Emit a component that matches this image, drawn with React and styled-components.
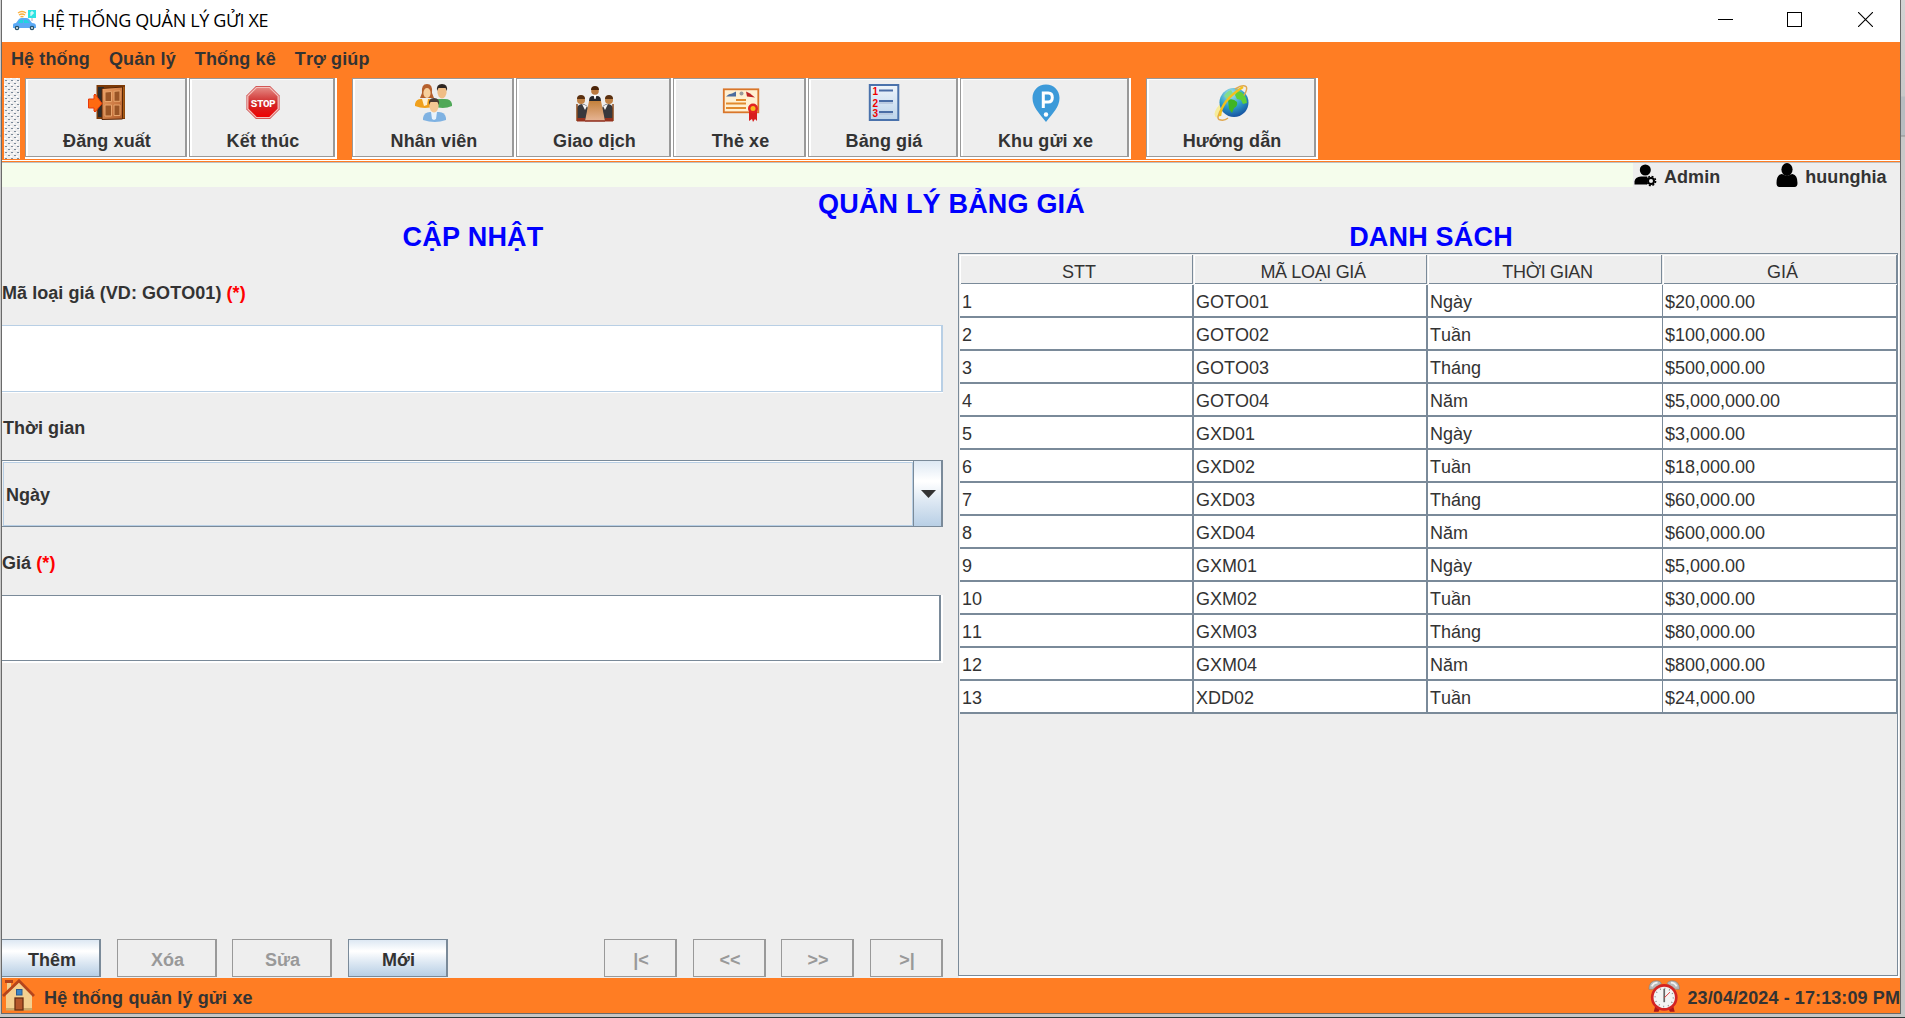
import React from "react";
import styled, { createGlobalStyle, css } from "styled-components";

const ORANGE = "#ff7d23";
const PANEL = "#eeeeee";
const LINE = "#7a8a99";
const SOFT = "#b8cfe5";
const DISABLED = "#999999";

const Global = createGlobalStyle`
  * { box-sizing: border-box; }
  html, body { margin: 0; padding: 0; overflow: hidden; }
  body {
    font-family: "Liberation Sans", Arial, sans-serif;
    font-size: 18px;
    line-height: 20px;
    color: #333333;
    font-kerning: none;
  }
  button { font: inherit; color: inherit; margin: 0; }
`;

const Desktop = styled.div`
  width: 1905px;
  height: 1018px;
  padding: 0 4px 4px 1px;
  background: linear-gradient(to bottom, #d3d3d3 0, #c9c9c9 96px, #b8bdc1 97px, #b8bdc1 135px, #8f8f8f 136px, #c9c9c9 137px, #c6c6c6 1017px, #2f3b3b 1017px);
`;

const Window = styled.div`
  height: 100%;
  display: flex;
  flex-direction: column;
  overflow: hidden;
  border: solid #6a6a6a;
  border-width: 0 1px 1px 1px;
  background: ${PANEL};
`;

const TitleBar = styled.header`
  height: 42px;
  flex: none;
  display: flex;
  align-items: center;
  padding-left: 10px;
  background: #ffffff;
  color: #000000;
`;

const TitleText = styled.span`
  flex: 1;
  margin-left: 5px;
  padding-bottom: 2px;
  font: 18px/22px "Open Sans", "Noto Sans", sans-serif;
  letter-spacing: -0.36px;
  white-space: nowrap;
`;

const TitleControls = styled.div`
  display: flex;
  gap: 55px;
  padding: 0 27px 3px 0;
  svg:nth-child(2) { margin-left: -1px; }
  svg:nth-child(3) { margin-left: 1px; }
`;

const MenuBar = styled.nav`
  height: 36px;
  flex: none;
  display: flex;
  gap: 19px;
  padding: 7px 0 0 9px;
  background: ${ORANGE};
  font-weight: bold;
  letter-spacing: 0.12px;
`;

const ToolBar = styled.div`
  height: 82px;
  flex: none;
  display: flex;
  padding-left: 2px;
  background: ${ORANGE};
`;

const Grip = styled.svg`
  width: 16px;
  height: 81px;
  margin-right: 5px;
  background: ${PANEL};
`;

const ToolShell = styled.div`
  width: ${(p) => p.$w}px;
  height: 81px;
  margin-right: ${(p) => (p.$last ? 15 : 0)}px;
  padding: 0 2px 2px 0;
  background: #ffffff;
`;

const ToolButton = styled.button`
  width: 100%;
  height: 79px;
  display: flex;
  flex-direction: column;
  align-items: center;
  gap: 9px;
  padding: 5px 0 0 3px;
  border: solid ${DISABLED};
  border-width: 1px 2px 1px 1px;
  background: ${PANEL};
  box-shadow: inset 2px 1px 0 #ffffff;
  font-weight: bold;
  letter-spacing: 0.1px;
  white-space: nowrap;
  svg { width: 38px; height: 38px; flex: none; }
`;

const Seam = styled.div`
  height: 3px;
  flex: none;
  background: linear-gradient(#ffffff 1px, ${ORANGE} 1px, ${ORANGE} 2px, #c0c0c0 2px);
`;

const UserBar = styled.div`
  height: 24px;
  flex: none;
  display: flex;
  font-weight: bold;
`;

const UserFill = styled.div`
  width: 1631px;
  background: #f5fdec;
`;

const UserItem = styled.div`
  display: flex;
  align-items: flex-start;
  gap: ${(p) => p.$gap}px;
  margin-left: ${(p) => p.$left}px;
  letter-spacing: 0.05px;
  span { padding-top: 4px; }
`;

const Heading = styled.h1`
  height: 33px;
  flex: none;
  margin: 0;
  padding: 1px 0 0 ${(p) => p.$shift || 0}px;
  text-align: center;
  font-size: 27px;
  line-height: 33px;
  font-weight: bold;
  letter-spacing: 0.18px;
  color: #0000ff;
`;

const Columns = styled.main`
  flex: 1;
  display: flex;
  gap: 15px;
  min-height: 0;
`;

const FormColumn = styled.section`
  width: 941px;
  display: flex;
  flex-direction: column;
`;

const Label = styled.label`
  height: ${(p) => p.$h}px;
  display: flex;
  align-items: center;
  padding-top: ${(p) => p.$drop}px;
  margin-left: ${(p) => p.$left || 0}px;
  font-weight: bold;
  letter-spacing: 0.06px;
  white-space: pre;
`;

const Required = styled.span`
  color: #ff0000;
`;

const LockedField = styled.div`
  height: 67px;
  margin-bottom: 1px;
  background: #ffffff;
  border: solid ${SOFT};
  border-width: 1px 2px 1px 0;
  box-shadow: 0 1px 0 #ffffff;
`;

const PriceShell = styled.div`
  height: 68px;
  padding: 0 2px 2px 0;
  background: #ffffff;
`;

const PriceField = styled.div`
  height: 66px;
  background: #ffffff;
  border: solid ${LINE};
  border-width: 1px 2px 1px 0;
`;

const Combo = styled.div`
  height: 67px;
  display: flex;
  border: solid ${LINE};
  border-width: 1px 2px 1px 0;
  font-weight: bold;
`;

const ComboValue = styled.div`
  flex: 1;
  display: flex;
  align-items: center;
  margin: 1px 0 0 1px;
  padding: 1px 0 0 2px;
  border: 1px solid ${SOFT};
  box-shadow: 0 -1px 0 #ffffff;
`;

const oceanFill = css`
  background: linear-gradient(#dde8f3 0%, #ffffff 30%, #ffffff 32%, #dde8f3 62%, ${SOFT} 100%);
`;

const ComboArrow = styled.div`
  width: 28px;
  display: flex;
  justify-content: center;
  align-items: center;
  padding-left: 2px;
  border-left: 1px solid ${LINE};
  ${oceanFill}
`;

const ButtonRow = styled.div`
  display: flex;
  margin-top: auto;
  margin-bottom: 1px;
`;

const ActionButton = styled.button`
  width: ${(p) => p.$w}px;
  height: 38px;
  margin-left: ${(p) => p.$gap}px;
  padding: 4px 0 0 ${(p) => (p.$flush ? 3 : 2)}px;
  border: 1px solid ${LINE};
  border-right-width: 2px;
  border-left-width: ${(p) => (p.$flush ? 0 : 1)}px;
  font-weight: bold;
  ${oceanFill}
  &:disabled {
    background: ${PANEL};
    border-color: ${DISABLED};
    color: ${DISABLED};
  }
`;

const ListColumn = styled.section`
  width: 940px;
  display: flex;
  flex-direction: column;
`;

const TableFrame = styled.div`
  height: 723px;
  border: 1px solid ${LINE};
  box-shadow: 1px 2px 0 #ffffff;
`;

const gridRow = css`
  display: grid;
  grid-template-columns: 234px 234px 235px 234px;
  margin-left: 1px;
`;

const HeadRow = styled.div`
  ${gridRow}
  height: 31px;
  padding-top: 1px;
`;

const HeadCell = styled.div`
  height: 29px;
  margin: 0 1px 0 1px;
  padding: 7px 0 0 5px;
  letter-spacing: ${(p) => (p.$tight ? -0.35 : 0)}px;
  text-align: center;
  border: solid ${LINE};
  border-width: 0 1px 1px 0;
  box-shadow: inset 0 1px 0 #ffffff, 0 1px 0 #ffffff, -1px 0 0 #ffffff;
  &:last-child { margin-right: 0; }
`;

const BodyRow = styled.div`
  ${gridRow}
  height: 33px;
  background: #ffffff;
  border-bottom: 2px solid ${LINE};
`;

const Cell = styled.div`
  padding: 7px 0 0 2px;
  border-right: ${(p) => (p.$thin ? 1 : 2)}px solid ${LINE};
`;

const StatusBar = styled.footer`
  height: 35px;
  flex: none;
  display: flex;
  align-items: center;
  background: ${ORANGE};
  font-weight: bold;
  white-space: nowrap;
  overflow: hidden;
`;

const StatusText = styled.span`
  margin-left: ${(p) => p.$left}px;
  padding-top: 5px;
  letter-spacing: ${(p) => p.$track}px;
`;

const StatusClock = styled.div`
  width: 252px;
  flex: none;
  margin-left: auto;
  display: flex;
  align-items: center;
`;

const AppLogo = () => (
  <svg width="25" height="22" viewBox="0 0 25 22">
    <path d="M6 3q4-3 8 0M7 5q3-2 6 0M8.500 7q1.500-1 3 0" fill="none" stroke="#fbb040" strokeWidth="1.300" />
    <rect x="16" y="0" width="8" height="8" fill="#2fe3e3" />
    <path d="M19 6V2h2v2h-2" fill="none" stroke="#fff" />
    <path d="M20 8v3" stroke="#aab" />
    <path d="M1 18v-3q0-2 3-2l3-4q1-1 3-1h4q2 0 3 1l3 4q4 0 4 3v2z" fill="#5aa9f5" />
    <path d="M6 13l2-3h3v3zM12 10h3l3 3h-6z" fill="#22d3e0" />
    <circle cx="5" cy="18" r="2.300" fill="#27536b" /><circle cx="20" cy="18" r="2.300" fill="#27536b" />
    <circle cx="5" cy="18" r="0.900" fill="#fff" /><circle cx="20" cy="18" r="0.900" fill="#fff" />
  </svg>
);

const DoorIcon = () => (
  <svg viewBox="0 0 38 38">
    <defs>
      <linearGradient id="wood" x1="0" x2="1" y1="0" y2="1">
        <stop offset="0" stopColor="#f0a468" /><stop offset="1" stopColor="#b05a28" />
      </linearGradient>
    </defs>
    <rect x="8.500" y="1" width="28.500" height="34" fill="#7c3a08" />
    <rect x="10" y="3" width="6" height="30" fill="#2b2b2b" />
    <rect x="34" y="3" width="2.500" height="31" fill="#a85b14" />
    <path d="M14 4.500L34.500 3v32L14 35.500z" fill="url(#wood)" stroke="#5a2606" />
    <g fill="#9a5526" stroke="#e8a56c" strokeWidth="1">
      <path d="M17 8l6.500-.5v10H17zM26 7.300l6-.5v10.500h-6zM17 21h6.500v11H17zM26 21h6v10.500h-6z" />
    </g>
    <path d="M0.500 15H6v-4l1-1 7 9.500L7 28l-1-1v-3H0.500z" fill="#ff6a10" stroke="#e8380c" />
  </svg>
);

const StopIcon = () => (
  <svg viewBox="0 0 38 38">
    <defs>
      <linearGradient id="stopRed" x1="0" x2="0" y1="0" y2="1">
        <stop offset="0" stopColor="#e58b85" /><stop offset=".5" stopColor="#cf2b2b" /><stop offset="1" stopColor="#f00000" />
      </linearGradient>
    </defs>
    <path d="M12 2h14l9.500 9.500v14L26 35H12l-9.500-9.500v-14z" fill="#c93434" />
    <path d="M12.500 3.300h13l8.700 8.700v13l-8.700 8.700h-13L3.800 25V12z" fill="url(#stopRed)" stroke="#f3c2bd" strokeWidth="1.300" />
    <text x="19.300" y="22.500" textAnchor="middle" textLength="25" fontFamily="Liberation Mono, monospace" fontWeight="bold" fontSize="11" fill="#fff">STOP</text>
  </svg>
);

const StaffIcon = () => (
  <svg viewBox="0 0 38 38">
    <path d="M0 20q1-5 6-5h8q5 0 6 5v2q-10 4-20 0z" fill="#f0a01c" />
    <path d="M7 15h6l-1 6-3 1z" fill="#fff0d0" />
    <path d="M18 20q1-5 6-5h6q6 0 7 5v2q-9 4-19 0z" fill="#4fa858" />
    <path d="M12 0q6 0 5 9l2 5H5l2-5q-1-9 5-9z" fill="#b5602d" />
    <ellipse cx="12" cy="9" rx="3.600" ry="5" fill="#f7cf9b" />
    <ellipse cx="27" cy="8" rx="4.600" ry="6.500" fill="#efbd85" />
    <path d="M22 7q-1-7 5-7t5 7l-1.500-3h-7z" fill="#2e2622" />
    <path d="M8 34q1-6 7-6h9q6 0 7 6v2q-11 4-23 0z" fill="#7fb2e2" />
    <path d="M16 28h6l-1 7-2 1-2-1z" fill="#e8f2fb" />
    <ellipse cx="19" cy="22" rx="4.600" ry="6.500" fill="#f4c794" />
    <path d="M14 21q-1-7 5-7t5 7l-1.500-3h-7z" fill="#4b3a32" />
  </svg>
);

const MeetingIcon = () => (
  <svg viewBox="0 0 38 38">
    <defs>
      <linearGradient id="desk" x1="0" x2="0" y1="0" y2="1">
        <stop offset="0" stopColor="#c4813c" /><stop offset="1" stopColor="#e7b596" />
      </linearGradient>
    </defs>
    <path d="M13 17q0-5 4-5h4q4 0 4 5v2H13z" fill="#26262a" />
    <path d="M17.500 11h3l-1 4h-1z" fill="#fff" />
    <circle cx="19" cy="7" r="3.800" fill="#b9793f" /><path d="M15 6q0-4 4-4t4 4z" fill="#4b2408" />
    <path d="M1 36V24q1-4 6-4 5 1 5 5l-2 11z" fill="#38383c" />
    <path d="M37 36V24q-1-4-6-4-5 1-5 5l2 11z" fill="#38383c" />
    <path d="M6 20l3 6 2-4zM32 20l-3 6-2-4z" fill="#f4f4f4" />
    <circle cx="5" cy="16" r="4" fill="#c08245" /><path d="M1 15q0-4 4-4t4 4z" fill="#5a3010" />
    <circle cx="33" cy="16" r="4" fill="#c08245" /><path d="M29 15q0-4 4-4t4 4z" fill="#5a3010" />
    <path d="M13 17h12l4 20H9z" fill="url(#desk)" />
    <path d="M1 20v17M37 20v17" stroke="#8a4a1c" strokeWidth="1.500" />
    <path d="M1 34h8v3.500H1zM29 34h8v3.500h-8z" fill="#96331f" /><path d="M9 37h20" stroke="#8c2a1a" strokeWidth="1.500" />
  </svg>
);

const CardIcon = () => (
  <svg viewBox="0 0 38 38">
    <rect x="1.800" y="5.300" width="34.500" height="23" fill="#fff0d2" stroke="#d9762a" strokeWidth="1.800" />
    <path d="M4 12.500q3-3 6-3l4-2v5z" fill="#4c6d9e" />
    <path d="M24 7.500l4 2 5 4-8-1z" fill="#bf2424" /><circle cx="19.500" cy="9.500" r="2" fill="#9a9a9a" />
    <path d="M14 16h10M4 19.500h20M4 24h20" stroke="#e18a2e" strokeWidth="2" />
    <path d="M27 27h8v10l-2-2-2 3-1-3-3 2z" fill="#d81e1e" />
    <circle cx="31" cy="24.500" r="5" fill="#e22323" /><circle cx="31" cy="24.500" r="2.500" fill="#f9b81c" />
  </svg>
);

const ListIcon = () => (
  <svg viewBox="0 0 38 38">
    <defs>
      <linearGradient id="sheet" x1="0" x2="0" y1="0" y2="1">
        <stop offset="0" stopColor="#eef5fb" /><stop offset="1" stopColor="#bcd3ea" />
      </linearGradient>
    </defs>
    <rect x="4.800" y="1" width="28.500" height="35" fill="url(#sheet)" stroke="#4a72ac" strokeWidth="2" />
    <path d="M14 6.500h14M14 17h14M14 28h14" stroke="#4a6da5" strokeWidth="2.200" />
    <path d="M14 19h14M14 30h14" stroke="#b4c4dc" strokeWidth="1.500" />
    <g fontFamily="Liberation Sans, sans-serif" fontWeight="bold" fontSize="10" fill="#f00000">
      <text x="7.500" y="11">1</text><text x="7.500" y="22.500">2</text><text x="7.500" y="33">3</text>
    </g>
  </svg>
);

const ParkingIcon = () => (
  <svg viewBox="0 0 38 38">
    <path d="M19 0.500c8 0 13.500 6 13.500 13.500C32.500 23 26 29 19 38 12 29 5.500 23 5.500 14 5.500 6.500 11 .5 19 .5z" fill="#3c9ad9" />
    <path d="M16.300 24V9h5q4 0 4 4.500t-4 4.500h-5" fill="none" stroke="#fff" strokeWidth="3" />
    <circle cx="19" cy="30.500" r="2.200" fill="#fff" />
  </svg>
);

const GlobeIcon = () => (
  <svg viewBox="0 0 38 38">
    <defs>
      <radialGradient id="sea" cx=".4" cy=".2" r=".9">
        <stop offset="0" stopColor="#a9e6ee" /><stop offset=".5" stopColor="#2f9fc8" /><stop offset="1" stopColor="#0f3f98" />
      </radialGradient>
    </defs>
    <path d="M7 20q-7 8-5 12 1 3 6 0z" fill="#f6ec9a" />
    <circle cx="21" cy="18.500" r="14.500" fill="url(#sea)" />
    <path d="M24 7q6 0 9 7l1 5-4 1-2-4-4-1-2-4z" fill="#5fcf35" />
    <path d="M15 16q5-2 9 2 1 4-3 6l-2 5-3-4z" fill="#3fb524" />
    <path d="M11 12q3-5 7-6l2 3-6 6z" fill="#84dd8b" />
    <path d="M9 24q-6 10-3 11.500 5 2 9-1.500M22 5q8-5 11-2.500 2 2-2 9" fill="none" stroke="#e0a850" strokeWidth="1.500" />
    <path d="M7 32Q8 17 30 3" fill="none" stroke="#f3c01c" strokeWidth="2.400" />
  </svg>
);

const AdminIcon = () => (
  <svg width="23" height="24" viewBox="0 0 23 24">
    <circle cx="11.300" cy="7" r="5.500" />
    <path d="M0.500 21.500v-3Q1 14 7 13.500h6l1 2-1 6z" />
    <circle cx="17" cy="18" r="3" fill="none" stroke="#000" strokeWidth="2" />
    <circle cx="17" cy="18" r="4.600" fill="none" stroke="#000" strokeWidth="1.500" strokeDasharray="2 1.610" />
  </svg>
);

const UserIcon = () => (
  <svg width="22" height="24" viewBox="0 0 22 24">
    <ellipse cx="11" cy="6.500" rx="5.600" ry="6.500" />
    <path d="M0.500 20q0-8 5-9l2 .5q3.500 2.500 7 0l2-.5q5 1 5 9 0 4-3 4h-15q-3 0-3-4z" />
  </svg>
);

const HouseIcon = () => (
  <svg width="33" height="33" viewBox="0 0 33 33">
    <path d="M3 1h8v3H9v7l-4 4V4H3z" fill="#f0cf90" /><path d="M3 1h8v3H3z" fill="#b2431b" />
    <path d="M4 15L17 3l13 12v16H4z" fill="#f4d090" />
    <path d="M4 29h26v2.500H4z" fill="#c9a96b" />
    <path d="M1 17L17 1.800 32 17" fill="none" stroke="#b5451c" strokeWidth="2.800" />
    <rect x="14.500" y="10.500" width="5.500" height="5.500" fill="#3a84c4" stroke="#2a5a90" />
    <rect x="13" y="19" width="8" height="12" fill="#b5562a" stroke="#6b2d10" strokeWidth="1.300" />
  </svg>
);

const ClockIcon = () => (
  <svg width="34" height="35" viewBox="0 0 34 35">
    <path d="M8 27l-2 7.500h5l2-4zM26 27l2 7.500h-5l-2-4z" fill="#b01616" />
    <path d="M1 11q0-9 8-9 4 0 5 3L5 11zM33 11q0-9-8-9-4 0-5 3l9 6z" fill="#b9b9b9" stroke="#7d7d7d" strokeWidth=".6" />
    <path d="M4 8q2-4 6-4M30 8q-2-4-6-4" stroke="#f2f2f2" strokeWidth="2" fill="none" />
    <circle cx="17" cy="19.500" r="14" fill="#d32323" />
    <circle cx="17" cy="19.500" r="11.200" fill="#f3f3f3" />
    <circle cx="17" cy="19.500" r="9.500" fill="none" stroke="#888" strokeDasharray="1 3.970" strokeWidth="1.500" />
    <path d="M17 10.500v14" stroke="#666" strokeWidth="1.800" />
    <path d="M17 20l6-6" stroke="#d33" />
  </svg>
);

const tools = [
  { label: "Đăng xuất", width: 164, Icon: DoorIcon },
  { label: "Kết thúc", width: 148, Icon: StopIcon, last: true },
  { label: "Nhân viên", width: 164, Icon: StaffIcon },
  { label: "Giao dịch", width: 157, Icon: MeetingIcon },
  { label: "Thẻ xe", width: 135, Icon: CardIcon },
  { label: "Bảng giá", width: 152, Icon: ListIcon },
  { label: "Khu gửi xe", width: 171, Icon: ParkingIcon, last: true },
  { label: "Hướng dẫn", width: 172, Icon: GlobeIcon },
];

const prices = [
  ["GOTO01", "Ngày", "$20,000.00"],
  ["GOTO02", "Tuần", "$100,000.00"],
  ["GOTO03", "Tháng", "$500,000.00"],
  ["GOTO04", "Năm", "$5,000,000.00"],
  ["GXD01", "Ngày", "$3,000.00"],
  ["GXD02", "Tuần", "$18,000.00"],
  ["GXD03", "Tháng", "$60,000.00"],
  ["GXD04", "Năm", "$600,000.00"],
  ["GXM01", "Ngày", "$5,000.00"],
  ["GXM02", "Tuần", "$30,000.00"],
  ["GXM03", "Tháng", "$80,000.00"],
  ["GXM04", "Năm", "$800,000.00"],
  ["XDD02", "Tuần", "$24,000.00"],
];

const actions = [
  { label: "Thêm", width: 99, gap: 0, flush: true, enabled: true },
  { label: "Xóa", width: 100, gap: 16 },
  { label: "Sửa", width: 100, gap: 15 },
  { label: "Mới", width: 100, gap: 16, enabled: true },
  { label: "|<", width: 73, gap: 156 },
  { label: "<<", width: 73, gap: 16 },
  { label: ">>", width: 73, gap: 15 },
  { label: ">|", width: 73, gap: 16 },
];

export default function App() {
  return (
    <Desktop>
      <Global />
      <Window>
        <TitleBar>
          <AppLogo />
          <TitleText>HỆ THỐNG QUẢN LÝ GỬI XE</TitleText>
          <TitleControls>
            <svg width="15" height="15"><path d="M0 7.500h15" stroke="#000" /></svg>
            <svg width="15" height="15"><rect x="0.500" y="0.500" width="14" height="14" fill="none" stroke="#000" /></svg>
            <svg width="15" height="15"><path d="M0 0l15 15M15 0L0 15" stroke="#000" strokeWidth="1.100" /></svg>
          </TitleControls>
        </TitleBar>
        <MenuBar>
          {["Hệ thống", "Quản lý", "Thống kê", "Trợ giúp"].map((m) => <span key={m}>{m}</span>)}
        </MenuBar>
        <ToolBar>
          <Grip>
            <defs>
              <pattern id="bumps" width="6" height="6" patternUnits="userSpaceOnUse">
                <path d="M0 0h2v1H0zM3 3h2v1H3z" fill="#fff" />
                <path d="M1 2h2v1H1zM4 5h2v1H4z" fill={LINE} />
              </pattern>
            </defs>
            <rect width="16" height="81" fill="url(#bumps)" />
          </Grip>
          {tools.map(({ label, width, Icon, last }) => (
            <ToolShell key={label} $w={width} $last={last}>
              <ToolButton><Icon />{label}</ToolButton>
            </ToolShell>
          ))}
        </ToolBar>
        <Seam />
        <UserBar>
          <UserFill />
          <UserItem $left={1} $gap={7}><AdminIcon /><span>Admin</span></UserItem>
          <UserItem $left={56} $gap={7}><UserIcon /><span>huunghia</span></UserItem>
        </UserBar>
        <Heading $shift={1}>QUẢN LÝ BẢNG GIÁ</Heading>
        <Columns>
          <FormColumn>
            <Heading as="h2" $shift={1}>CẬP NHẬT</Heading>
            <Label $h={72} $drop={8}>Mã loại giá (VD: GOTO01) <Required>(*)</Required></Label>
            <LockedField />
            <Label $h={67} $drop={2} $left={1}>Thời gian</Label>
            <Combo>
              <ComboValue>Ngày</ComboValue>
              <ComboArrow>
                <svg width="15" height="8"><path d="M0 0h15L7.500 8z" fill="#333" /></svg>
              </ComboArrow>
            </Combo>
            <Label $h={68} $drop={3}>Giá <Required>(*)</Required></Label>
            <PriceShell><PriceField /></PriceShell>
            <ButtonRow>
              {actions.map((a) => (
                <ActionButton key={a.label} $w={a.width} $gap={a.gap} $flush={a.flush} disabled={!a.enabled}>
                  {a.label}
                </ActionButton>
              ))}
            </ButtonRow>
          </FormColumn>
          <ListColumn>
            <Heading as="h2" $shift={6}>DANH SÁCH</Heading>
            <TableFrame>
              <HeadRow>
                {["STT", "MÃ LOẠI GIÁ", "THỜI GIAN", "GIÁ"].map((h) => (
                  <HeadCell key={h} $tight={h.includes(" ")}>{h}</HeadCell>
                ))}
              </HeadRow>
              {prices.map(([code, period, price], i) => (
                <BodyRow key={code}>
                  <Cell>{i + 1}</Cell>
                  <Cell>{code}</Cell>
                  <Cell $thin>{period}</Cell>
                  <Cell $thin>{price}</Cell>
                </BodyRow>
              ))}
            </TableFrame>
          </ListColumn>
        </Columns>
        <StatusBar>
          <HouseIcon />
          <StatusText $left={9} $track={0.16}>Hệ thống quản lý gửi xe</StatusText>
          <StatusClock>
            <ClockIcon />
            <StatusText $left={7} $track={0.1}>23/04/2024 - 17:13:09 PM</StatusText>
          </StatusClock>
        </StatusBar>
      </Window>
    </Desktop>
  );
}
